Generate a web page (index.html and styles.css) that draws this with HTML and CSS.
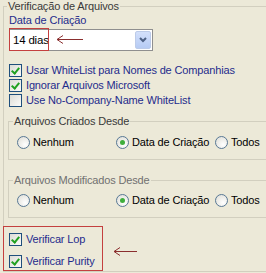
FILE: index.html
```html
<!DOCTYPE html>
<html lang="pt">
  <head>
    <meta http-equiv="Content-Type" content="text/html;charset=UTF-8" />
    <title>Verificação de Arquivos</title>
    <link rel="stylesheet" href="styles.css">
  </head>
  <body>
    <fieldset class="group group-main">
      <legend>Verificação de Arquivos</legend>

      <div class="field-label">Data de Criação</div>
      <div class="combo">
        <span class="combo-value">14 dias</span>
        <span class="combo-btn">
          <svg width="8" height="6" viewBox="0 0 8 6"><path d="M1 1 L4 4 L7 1" fill="none" stroke="#4d6185" stroke-width="2"/></svg>
        </span>
        <span class="mark mark-combo"></span>
        <svg class="arrow arrow-combo" width="28" height="11" viewBox="0 0 28 11"><path d="M1 5.5 H27 M1 5.5 L7 1.5 M1 5.5 L7 9.5" fill="none" stroke="#8a2e2e" stroke-width="1"/></svg>
      </div>

      <ul class="checks">
        <li><span class="check on"></span>Usar WhiteList para Nomes de Companhias</li>
        <li><span class="check on"></span>Ignorar Arquivos Microsoft</li>
        <li><span class="check"></span>Use No-Company-Name WhiteList</li>
      </ul>

      <fieldset class="group group-sub">
        <legend>Arquivos Criados Desde</legend>
        <div class="radios">
          <label><span class="radio"></span>Nenhum</label>
          <label><span class="radio on"></span>Data de Criação</label>
          <label><span class="radio"></span>Todos</label>
        </div>
      </fieldset>

      <fieldset class="group group-sub group-second faded">
        <legend>Arquivos Modificados Desde</legend>
        <div class="radios">
          <label><span class="radio"></span>Nenhum</label>
          <label><span class="radio on"></span>Data de Criação</label>
          <label><span class="radio"></span>Todos</label>
        </div>
      </fieldset>

      <div class="verify">
        <ul class="checks checks-verify">
          <li><span class="check on"></span>Verificar Lop</li>
          <li><span class="check on"></span>Verificar Purity</li>
        </ul>
        <svg class="arrow arrow-verify" width="25" height="11" viewBox="0 0 25 11"><path d="M1 5.5 H24 M1 5.5 L7 1.5 M1 5.5 L7 9.5" fill="none" stroke="#8a2e2e" stroke-width="1"/></svg>
      </div>
    </fieldset>
  </body>
</html>
```

FILE: styles.css
```css
/* XP style options panel */

* {
  box-sizing: border-box;
}

body {
  margin: 0;
  width: 266px;
  height: 273px;
  overflow: hidden;
  background: #ece9d8;
  font-family: "Liberation Sans", Arial, sans-serif;
  font-size: 11px;
  line-height: 13px;
  letter-spacing: -0.15px;
  color: #000;
  white-space: nowrap;
}

/* Group boxes */
.group {
  border: 1px solid #d2cfbf;
  margin: 0;
  min-width: 0;
}

.group legend {
  padding: 0 1px;
  margin-left: -2px;
  color: #3a3a3a;
}

.group-main {
  width: 300px;
  margin-left: 3px;
  padding: 1px 0 0 5px;
}

.group-sub {
  width: 290px;
  margin: 7px 0 0 -1px;
  padding: 7px 0 9px 8px;
}

.group-second {
  margin-top: 14px;
  padding-top: 6px;
}

.group-sub legend {
  margin-left: -4px;
}

.faded legend {
  color: #707070;
}

/* Combo box */
.field-label {
  color: #1f2c8c;
}

.combo {
  position: relative;
  display: flex;
  align-items: center;
  justify-content: space-between;
  width: 144px;
  height: 22px;
  margin-top: 2px;
  background: #fff;
  border: 1px solid #8f8f8f;
  padding: 0 1px 0 3px;
}

.combo-value {
  font-size: 11.5px;
  letter-spacing: -0.2px;
}

.combo-btn {
  display: flex;
  align-items: center;
  justify-content: center;
  width: 16px;
  height: 18px;
  background: linear-gradient(#d3e0fb, #b6cbf4);
  border: 1px solid #bccbe9;
  border-radius: 2px;
}

.mark {
  position: absolute;
  border: 1px solid #c4403f;
}

.mark-combo {
  left: -1px;
  top: -2px;
  width: 40px;
  height: 23px;
}

.arrow {
  position: absolute;
}

.arrow-combo {
  left: 46px;
  top: 4px;
}

/* Checkboxes */
.checks {
  list-style: none;
  margin: 12px 0 0;
  padding: 0;
  color: #1f2c8c;
}

.checks li {
  display: flex;
  align-items: center;
  gap: 4px;
  height: 15px;
}

.check {
  position: relative;
  flex: none;
  width: 13px;
  height: 13px;
  border: 1px solid #1f4f7c;
  background: linear-gradient(135deg, #dcdcd6, #fbfbf9);
}

.check.on::after {
  content: "";
  position: absolute;
  left: 3px;
  top: 1px;
  width: 3px;
  height: 6px;
  border: solid #21a121;
  border-width: 0 2px 2px 0;
  transform: rotate(40deg);
}

/* Radio buttons */
.radios {
  display: flex;
}

.radios label {
  display: flex;
  flex: none;
  align-items: center;
  gap: 3px;
  width: 99px;
  height: 15px;
}

.radio {
  position: relative;
  flex: none;
  width: 13px;
  height: 13px;
  border: 1px solid #587895;
  border-radius: 50%;
  background: radial-gradient(circle at 65% 70%, #fff, #dddcd4);
}

.radio.on::after {
  content: "";
  position: absolute;
  left: 3px;
  top: 3px;
  width: 5px;
  height: 5px;
  border-radius: 50%;
  background: #3fae3c;
}

/* Highlighted verify block */
.verify {
  position: relative;
  margin-left: -6px;
  margin-top: 8px;
}

.checks-verify {
  width: 100px;
  height: 45px;
  margin: 0;
  padding: 5px 0 0 5px;
  border: 1px solid #c4403f;
  display: flex;
  flex-direction: column;
  gap: 7px;
}

.arrow-verify {
  left: 110px;
  top: 20px;
}
```
